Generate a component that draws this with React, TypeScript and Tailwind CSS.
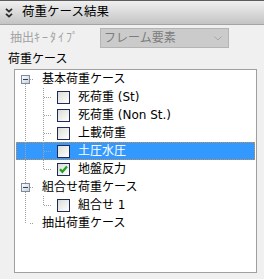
type Cell = "pipe" | "tee" | "elbow" | "boxDown" | "boxBoth";

type Node = {
  label: string;
  cells: Cell[];
  check?: "on" | "off";
  selected?: boolean;
};

const nodes: Node[] = [
  { label: "基本荷重ケース", cells: ["boxDown"] },
  { label: "死荷重 (St)", cells: ["pipe", "tee"], check: "off" },
  { label: "死荷重 (Non St.)", cells: ["pipe", "tee"], check: "off" },
  { label: "上載荷重", cells: ["pipe", "tee"], check: "off" },
  { label: "土圧水圧", cells: ["pipe", "tee"], check: "off", selected: true },
  { label: "地盤反力", cells: ["pipe", "elbow"], check: "on" },
  { label: "組合せ荷重ケース", cells: ["boxBoth"] },
  { label: "組合せ 1", cells: ["pipe", "elbow"], check: "off" },
  { label: "抽出荷重ケース", cells: ["elbow"] },
];

function TreeCell({ kind, first }: { kind: Cell; first: boolean }) {
  const dot = { stroke: "#a0a0a0", strokeWidth: 1, strokeDasharray: "1 1" };
  const hx = first ? 14 : 10;
  return (
    <svg width="18" height="18" viewBox="0 0 18 18" className="shrink-0" shapeRendering="crispEdges">
      {kind === "pipe" && <line x1="9.5" y1="0" x2="9.5" y2="18" {...dot} />}
      {kind === "tee" && (
        <>
          <line x1="9.5" y1="0" x2="9.5" y2="18" {...dot} />
          <line x1={hx} y1="9.5" x2="18" y2="9.5" {...dot} />
        </>
      )}
      {kind === "elbow" && (
        <>
          <line x1="9.5" y1="0" x2="9.5" y2="10" {...dot} />
          <line x1={hx} y1="9.5" x2="18" y2="9.5" {...dot} />
        </>
      )}
      {(kind === "boxDown" || kind === "boxBoth") && (
        <>
          {kind === "boxBoth" && <line x1="9.5" y1="0" x2="9.5" y2="5" {...dot} />}
          <line x1="9.5" y1="14" x2="9.5" y2="18" {...dot} />
          <line x1="14" y1="9.5" x2="18" y2="9.5" {...dot} />
          <defs>
            <linearGradient id="exp" x1="0" y1="0" x2="1" y2="1">
              <stop offset="0" stopColor="#ffffff" />
              <stop offset="1" stopColor="#c9ced6" />
            </linearGradient>
          </defs>
          <rect x="5.5" y="5.5" width="8" height="8" fill="url(#exp)" stroke="#7c8ba3" />
          <line x1="7" y1="9.5" x2="12" y2="9.5" stroke="#2c3f6b" strokeWidth="1" />
        </>
      )}
    </svg>
  );
}

function CheckBox({ on }: { on: boolean }) {
  return (
    <div className="ml-[5px] w-[13px] h-[13px] shrink-0 border border-[#1f2a5c] bg-gradient-to-br from-[#dcdcd6] to-white flex items-center justify-center">
      {on && (
        <svg width="9" height="9" viewBox="0 0 9 9">
          <path d="M1 4.2 L3.4 6.8 L8 1.6" fill="none" stroke="#21a121" strokeWidth="2.2" />
        </svg>
      )}
    </div>
  );
}

export default function App() {
  return (
    <div className="w-[264px] h-[279px] bg-[#f0f0f0] text-[12px] text-black [font-family:'DejaVu_Sans','Noto_Sans_CJK_JP',sans-serif] overflow-hidden">
      {/* ヘッダー */}
      <div className="h-[25px] border-t border-[#5c5c5c] border-b border-b-[#a4a4a4] bg-gradient-to-b from-[#f0f0f0] to-[#c4c4c4] flex items-center">
        <svg width="8" height="10" viewBox="0 0 8 10" className="ml-[5px]">
          <path d="M1 0.8 L4 3.6 L7 0.8 M1 5.8 L4 8.6 L7 5.8" fill="none" stroke="#2a2a2a" strokeWidth="1.8" />
        </svg>
        <span className="ml-[9px] text-[12.5px]">荷重ケース結果</span>
      </div>

      {/* 抽出キータイプ */}
      <div className="mt-[3px] h-[20px] flex items-center">
        <span className="w-[100px] shrink-0 pl-[10px] text-[#a2a2a2]">
          抽出<span className="tracking-[2px]">ｷｰﾀｲﾌﾟ</span>
        </span>
        <div className="w-[129px] h-[20px] border border-[#b4b4b4] bg-[#cbcbcb] flex items-center justify-between pl-[3px] pr-[6px] text-[#7c7c7c]">
          <span>フレーム要素</span>
          <svg width="8" height="5" viewBox="0 0 8 5">
            <path d="M0.5 0.5 L4 4 L7.5 0.5" fill="none" stroke="#a9a9a9" strokeWidth="1" />
          </svg>
        </div>
      </div>

      <div className="h-[21px] flex items-center pl-[8px]">荷重ケース</div>

      {/* ツリー */}
      <div className="ml-[14px] w-[243px] h-[204px] bg-white border border-[#a0a0a0] px-[1px]">
        {nodes.map((n) => (
          <div
            key={n.label}
            className={
              n.selected
                ? "h-[18px] flex items-center bg-[#3399ff] text-white outline outline-1 outline-dotted outline-[#d98a3a] -outline-offset-1"
                : "h-[18px] flex items-center"
            }
          >
            {n.cells.map((c, i) => (
              <TreeCell key={i} kind={c} first={n.cells.length === 1} />
            ))}
            {n.check && <CheckBox on={n.check === "on"} />}
            <span className="ml-[8px] whitespace-nowrap">{n.label}</span>
          </div>
        ))}
      </div>
    </div>
  );
}
